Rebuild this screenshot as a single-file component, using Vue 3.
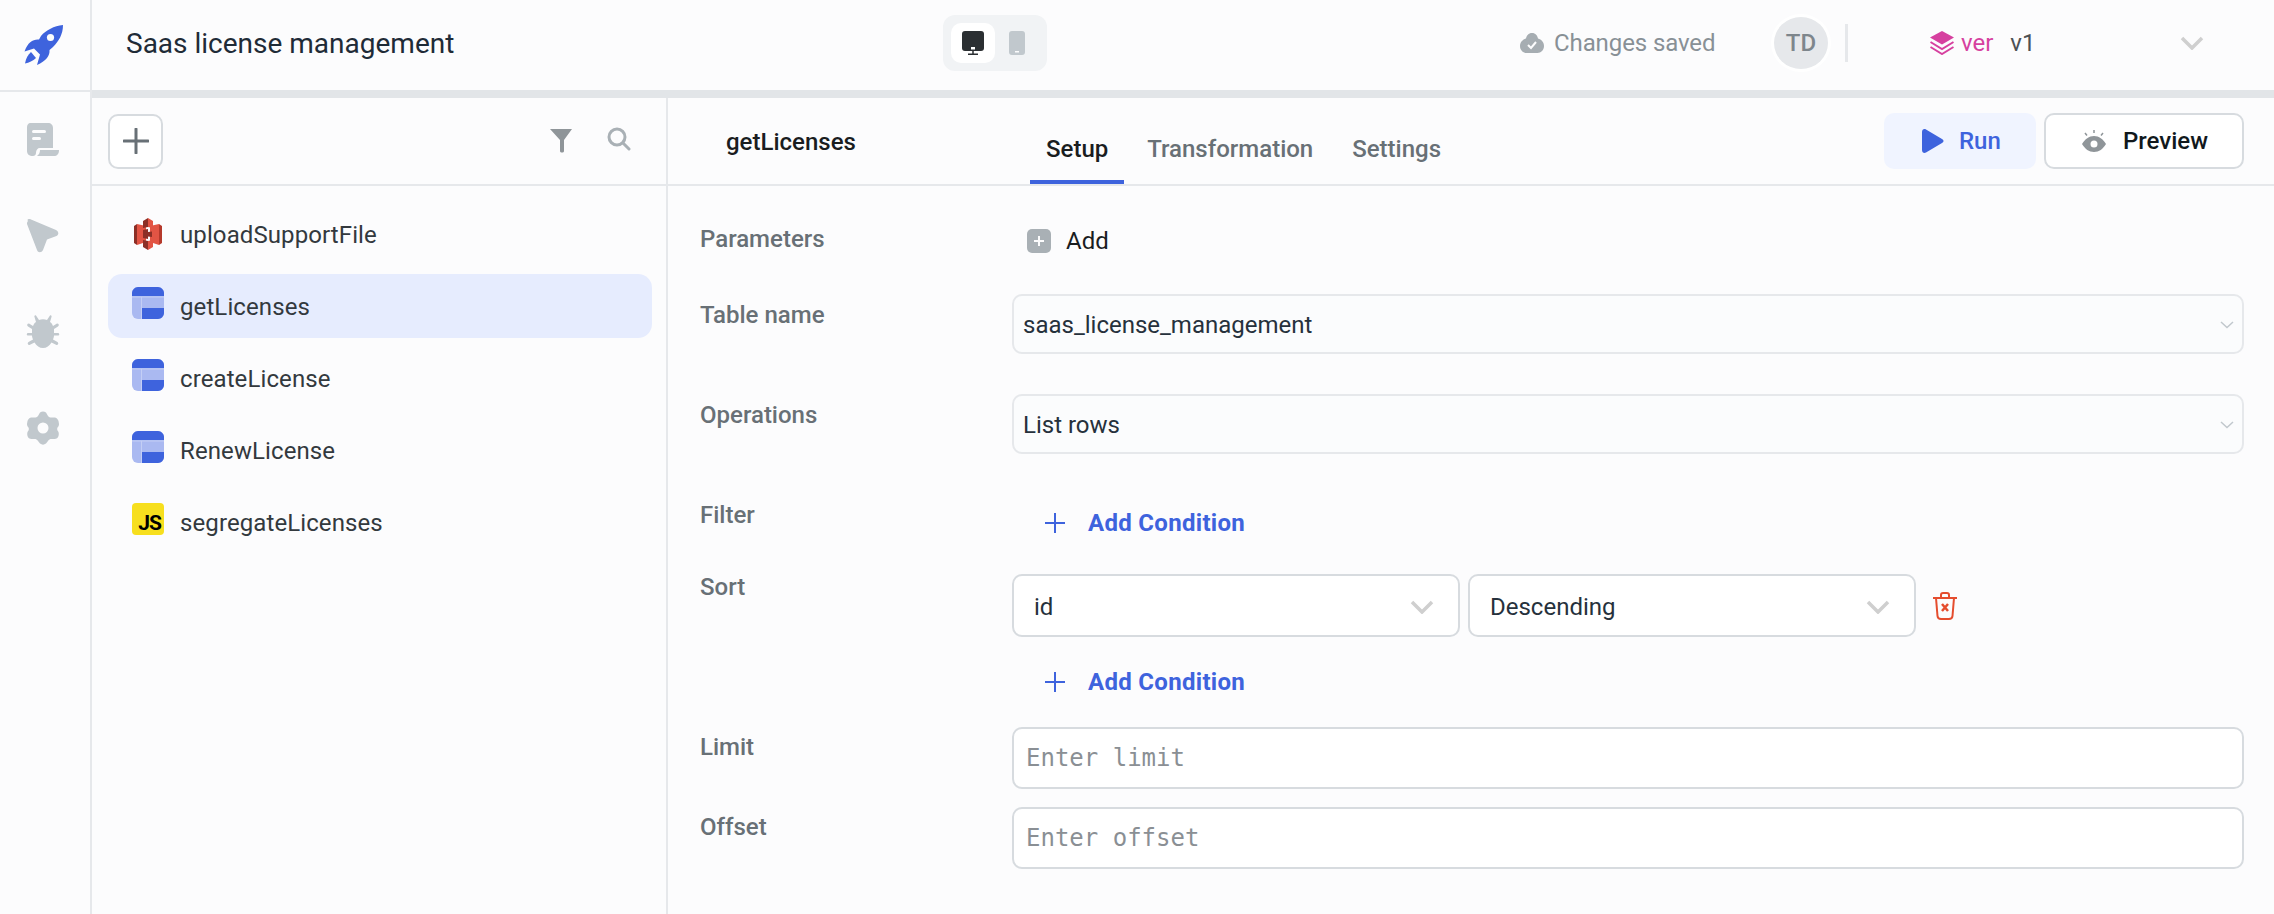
<template>
  <div class="app">
    <!-- left rail -->
    <aside class="rail">
      <div class="rail-logo">
        <svg width="40" height="40" viewBox="0 0 40 40">
          <path fill="#3e63dd" d="M39 0C30 1 22 5 17 11L15 14.500C9 14 4 17 0.500 26.500L10 23.500L16 29.500L13 40C22 36 26 31 25.500 25L29 22C35 16 39 9 39 0Z"/>
          <circle cx="26.500" cy="12.500" r="3.600" fill="#fcfcfd"/>
          <path fill="#3e63dd" d="M7 27L12 33C9 36 5 37.500 1 38.500C2 33 4 30 7 27Z"/>
        </svg>
      </div>
      <nav class="rail-nav">
        <svg width="34" height="34" viewBox="0 0 34 34">
          <path fill="#c1c8cd" d="M5 0H22C25 0 27 2 27 5V25H14C11.500 25 10 27 10 30C10 32 8.500 33 7 33C3 33 1 31 1 28V5C1 2 2 0 5 0Z"/>
          <path fill="#c1c8cd" d="M14 27H33C33 31 31 33 28 33H11C13 31.500 14 29.500 14 27Z"/>
          <rect x="6" y="7" width="14" height="3" rx="1.500" fill="#fcfcfd"/>
          <rect x="6" y="14" width="9" height="3" rx="1.500" fill="#fcfcfd"/>
        </svg>
        <svg width="34" height="34" viewBox="0 0 34 34">
          <path fill="#c1c8cd" d="M2 2C0.500 0.500 3 -0.500 5 0.500L30 11C33 12.500 33 16 30.500 17L21 20.500L17 31C15.500 34 12 34 11 31L1 5C1 4 1 3 2 2Z"/>
        </svg>
        <svg width="34" height="34" viewBox="0 0 34 34">
          <path fill="#c1c8cd" d="M10 0.500L13 5C15.500 4 18.500 4 21 5L24 0.500C25 0 26 1 25.500 2L24 7C25.500 8 26.500 9.500 27 11L31 8.500C33 8.500 33.500 10.500 32 11.500L28 14V18H32.500C33.500 19 33.500 20 32.500 20.500H28C28 22 27.500 23 27 24.500L31.500 27C33 28.500 32 30 30.500 30L25.500 27.500C23.500 31 20.500 33 17 33C13.500 33 10.500 31 8.500 27.500L3.500 30C2 30 1 28.500 2.500 27L7 24.500C6.500 23 6 22 6 20.500H1.500C0.500 20 0.500 19 1.500 18H6V14L2 11.500C0.500 10.500 1 8.500 3 8.500L7 11C7.500 9.500 8.500 8 10 7L8.500 2C8 1 9 0 10 0.500Z"/>
        </svg>
        <svg width="34" height="34" viewBox="0 0 34 34">
          <path fill="#c1c8cd" fill-rule="evenodd" d="M14 1.500C16 0 18 0 20 1.500L22 5C23 6 24 6.500 25.500 6.500L29 6.500C31 7 32 8.500 32.500 10L33 13C33 14.500 32.500 15.500 31.500 16.500C31 17.500 31 18.500 31.500 19.500C33 21 33 23 32.500 25C32 27 30.500 28 28.500 28L25.500 28C24 28 23 28.500 22 30L20 32.500C18 34 16 34 14 32.500L12 30C11 28.500 10 28 8.500 28H5.500C3.500 28 2 27 1.500 25C1 23 1 21 2.500 19.500C3 18.500 3 17.500 2.500 16.500C1.500 15.500 1 14.500 1 13L1.500 10C2 8.500 3 7 5 6.500L8.500 6.500C10 6.500 11 6 12 5ZM17 11.500A5.500 5.500 0 1 0 17 22.500A5.500 5.500 0 1 0 17 11.500Z"/>
        </svg>
      </nav>
    </aside>

    <div class="main">
      <!-- top header -->
      <header class="topbar">
        <h1 class="app-name">Saas license management</h1>
        <div class="device-toggle">
          <span class="device active">
            <svg width="22" height="24" viewBox="0 0 22 24">
              <rect width="22" height="20" rx="3" fill="#2b2f32"/>
              <rect x="9" y="16" width="4" height="2.500" fill="#fff"/>
              <path d="M11 20V23M6 23.200H16" stroke="#2b2f32" stroke-width="1.500"/>
            </svg>
          </span>
          <span class="device">
            <svg width="16" height="24" viewBox="0 0 16 24">
              <rect width="16" height="24" rx="3" fill="#c1c8cd"/>
              <rect x="6" y="20" width="4" height="1.500" fill="#fcfcfd"/>
            </svg>
          </span>
        </div>
        <div class="saved">
          <svg width="24" height="20" viewBox="0 0 24 20">
            <path fill="#a6adb2" d="M12 0C15.500 0 17.500 2.500 18 5.500C21.500 6.500 24 9 24 13C24 17 21 20 17.500 20H6.500C3 20 0 17 0 13C0 9.500 2.500 6.500 6 5.500C6.500 2.500 8.500 0 12 0Z"/>
            <path d="M8 12L11 15L16 9" fill="none" stroke="#fcfcfd" stroke-width="2"/>
          </svg>
          <span>Changes saved</span>
        </div>
        <div class="avatar">TD</div>
        <div class="top-divider"></div>
        <div class="version">
          <svg width="24" height="24" viewBox="0 0 24 24">
            <path fill="#d6409f" d="M12 0L24 6.500L12 13.500L0 6.500Z"/>
            <path fill="none" stroke="#d6409f" stroke-width="2" d="M0.500 11L12 18L23.500 11M0.500 16L12 23L23.500 16"/>
          </svg>
          <span class="ver">ver</span>
          <span class="ver-num">v1</span>
          <svg class="ver-chevron" width="24" height="14" viewBox="0 0 24 14">
            <path d="M2 2L12 12L22 2" fill="none" stroke="#cfcfcf" stroke-width="3.500"/>
          </svg>
        </div>
      </header>

      <div class="body">
        <!-- query list -->
        <section class="queries">
          <div class="queries-tools">
            <button class="add-btn">
              <svg width="26" height="26" viewBox="0 0 26 26">
                <path d="M13 1V25M1 13H25" stroke="#687076" stroke-width="3" stroke-linecap="round"/>
              </svg>
            </button>
            <svg class="tool-filter" width="22" height="24" viewBox="0 0 22 24">
              <path fill="#8f9599" d="M0 0H22L14 11V22C14 24 10 24 10 22V11Z"/>
            </svg>
            <svg class="tool-search" width="24" height="24" viewBox="0 0 24 24">
              <circle cx="10" cy="10" r="8" fill="none" stroke="#a9b0b5" stroke-width="3"/>
              <path d="M16 16L22 22" stroke="#a9b0b5" stroke-width="3" stroke-linecap="round"/>
            </svg>
          </div>
          <ul class="query-list">
            <li v-for="q in queries" :key="q.name" class="query" :class="{ selected: q.selected }">
              <svg v-if="q.kind === 's3'" class="query-icon s3-icon" width="32" height="32" viewBox="0 0 32 32">
                <path fill="#8c2f26" d="M2 8L5 6V27L2 25Z"/>
                <path fill="#e25444" d="M5 6L14 8V24L5 27Z"/>
                <path fill="#e25444" d="M18 8L27 6V27L18 24Z"/>
                <path fill="#b5392c" d="M27 6L30 8V25L27 27Z"/>
                <path fill="#8c2f26" d="M16 0L11 3V10L16 9ZM11 22V29L16 32V23Z"/>
                <path fill="#e25444" d="M16 0L21 3V10L16 9ZM21 22V29L16 32V23Z"/>
                <path fill="#8c2f26" d="M11 12L16 11V14L20 13.500V19L16 18.500V21L11 20Z"/>
              </svg>
              <svg v-else-if="q.kind === 'table'" class="query-icon" width="32" height="32" viewBox="0 0 32 32">
                <rect width="32" height="32" rx="6" fill="#aab9f1"/>
                <path fill="#3e63dd" d="M6 0H26C29 0 32 3 32 6V9H0V6C0 3 3 0 6 0Z"/>
                <path fill="#3e63dd" d="M10 21H32V26C32 29 29 32 26 32H10Z"/>
                <path d="M0 10H32M9.500 10V32" stroke="#c3cef5" stroke-width="1"/>
              </svg>
              <span v-else class="query-icon js-icon">JS</span>
              <span class="query-name">{{ q.name }}</span>
            </li>
          </ul>
        </section>

        <!-- query editor -->
        <section class="editor">
          <div class="editor-head">
            <div class="query-title">getLicenses</div>
            <div class="tabs">
              <span class="tab active">Setup</span>
              <span class="tab">Transformation</span>
              <span class="tab">Settings</span>
            </div>
            <button class="run-btn">
              <svg width="22" height="24" viewBox="0 0 22 24">
                <path fill="#3e63dd" d="M0 3C0 0.500 2 -0.500 4 0.500L20 10C22 11 22 13 20 14L4 23.500C2 24.500 0 23.500 0 21Z"/>
              </svg>
              Run
            </button>
            <button class="preview-btn">
              <svg width="24" height="24" viewBox="0 0 24 24">
                <path d="M12 1V4M3 4L5 6.500M21 4L19 6.500" stroke="#8f9599" stroke-width="1.500"/>
                <path fill="#8f9599" fill-rule="evenodd" d="M12 7C17 7 21 10 24 15C21 20 17 23 12 23C7 23 3 20 0 15C3 10 7 7 12 7ZM12 11.500A3.500 3.500 0 1 0 12 18.500A3.500 3.500 0 1 0 12 11.500Z"/>
              </svg>
              Preview
            </button>
          </div>

          <div class="form">
            <div class="row row-params">
              <label>Parameters</label>
              <div class="add-param">
                <svg width="24" height="24" viewBox="0 0 24 24">
                  <rect width="24" height="24" rx="5" fill="#a9b0b5"/>
                  <path d="M12 7V17M7 12H17" stroke="#fcfcfd" stroke-width="2"/>
                </svg>
                <span>Add</span>
              </div>
            </div>
            <div class="row row-table">
              <label>Table name</label>
              <div class="field select">
                saas_license_management
                <svg width="14" height="8" viewBox="0 0 14 8"><path d="M1 1L7 6.500L13 1" fill="none" stroke="#c1c8cd" stroke-width="1.500"/></svg>
              </div>
            </div>
            <div class="row row-ops">
              <label>Operations</label>
              <div class="field select">
                List rows
                <svg width="14" height="8" viewBox="0 0 14 8"><path d="M1 1L7 6.500L13 1" fill="none" stroke="#c1c8cd" stroke-width="1.500"/></svg>
              </div>
            </div>
            <div class="row row-filter">
              <label>Filter</label>
              <div class="add-condition">
                <svg width="20" height="20" viewBox="0 0 20 20"><path d="M10 0V20M0 10H20" stroke="#3e63dd" stroke-width="2"/></svg>
                <span>Add Condition</span>
              </div>
            </div>
            <div class="row row-sort">
              <label>Sort</label>
              <div class="sort-line">
                <div class="field sort-select">id
                  <svg width="24" height="14" viewBox="0 0 24 14"><path d="M2 2L12 12L22 2" fill="none" stroke="#cfcfcf" stroke-width="3.500"/></svg>
                </div>
                <div class="field sort-select">Descending
                  <svg width="24" height="14" viewBox="0 0 24 14"><path d="M2 2L12 12L22 2" fill="none" stroke="#cfcfcf" stroke-width="3.500"/></svg>
                </div>
                <svg class="trash" width="24" height="28" viewBox="0 0 24 28">
                  <path fill="none" stroke="#e54d2e" stroke-width="2" d="M0 6H24M3 6L4.500 24C4.700 26 6 27 8 27H16C18 27 19.300 26 19.500 24L21 6M8 6V3C8 2 9 1 10 1H14C15 1 16 2 16 3V6"/>
                  <path stroke="#e54d2e" stroke-width="2.500" d="M9 12L15 19M15 12L9 19"/>
                </svg>
              </div>
            </div>
            <div class="row row-sort-add">
              <label></label>
              <div class="add-condition">
                <svg width="20" height="20" viewBox="0 0 20 20"><path d="M10 0V20M0 10H20" stroke="#3e63dd" stroke-width="2"/></svg>
                <span>Add Condition</span>
              </div>
            </div>
            <div class="row row-limit">
              <label>Limit</label>
              <input class="field text-input" placeholder="Enter limit" />
            </div>
            <div class="row row-offset">
              <label>Offset</label>
              <input class="field text-input" placeholder="Enter offset" />
            </div>
          </div>
        </section>
      </div>
    </div>
  </div>
</template>

<script setup>
const queries = [
  { name: 'uploadSupportFile', kind: 's3' },
  { name: 'getLicenses', kind: 'table', selected: true },
  { name: 'createLicense', kind: 'table' },
  { name: 'RenewLicense', kind: 'table' },
  { name: 'segregateLicenses', kind: 'js' }
]
</script>

<style>
html, body {
  margin: 0;
  background: #fcfcfd;
  overflow: hidden;
}
</style>

<style scoped>
* {
  box-sizing: border-box;
}

.app {
  display: flex;
  width: 2274px;
  height: 914px;
  background: #fcfcfd;
  font-family: "Roboto", "Noto Sans", sans-serif;
  font-size: 24px;
  color: #2b2f32;
}

/* left rail */
.rail {
  width: 92px;
  flex-shrink: 0;
  border-right: 2px solid #e6e8eb;
}

.rail-logo {
  height: 92px;
  padding: 25px 0 0 24px;
  border-bottom: 2px solid #e6e8eb;
}

.rail-nav {
  display: flex;
  flex-direction: column;
  gap: 62px;
  padding: 31px 0 0 26px;
}

.main {
  flex: 1;
  display: flex;
  flex-direction: column;
  min-width: 0;
}

/* top header */
.topbar {
  height: 98px;
  flex-shrink: 0;
  display: flex;
  align-items: center;
  padding: 0 30px 4px 34px;
  border-bottom: 8px solid #e2e5e8;
}

.app-name {
  width: 817px;
  margin: 0;
  font-size: 28px;
  font-weight: 400;
  color: #1f2b37;
}

.device-toggle {
  display: flex;
  align-items: center;
  width: 104px;
  height: 56px;
  padding: 0 8px;
  background: #f1f3f5;
  border-radius: 12px;
}

.device {
  width: 44px;
  height: 40px;
  display: flex;
  align-items: center;
  justify-content: center;
  border-radius: 10px;
}

.device.active {
  background: #fff;
}

.saved {
  display: flex;
  align-items: center;
  gap: 10px;
  margin-left: 473px;
  width: 254px;
  letter-spacing: -0.1px;
  color: #889096;
}

.avatar {
  width: 54px;
  height: 52px;
  border-radius: 50%;
  background: #e6e8eb;
  color: #7e868c;
  font-weight: 500;
  display: flex;
  align-items: center;
  justify-content: center;
  box-shadow: 0 0 0 3px #fff;
}

.top-divider {
  width: 3px;
  height: 38px;
  margin-left: 17px;
  background: #e6e8eb;
}

.version {
  display: flex;
  align-items: center;
  margin-left: 82px;
  flex: 1;
}

.ver {
  margin-left: 7px;
  color: #d6409f;
}

.ver-num {
  margin-left: 17px;
  color: #4c5155;
}

.ver-chevron {
  margin-left: auto;
  margin-right: 40px;
}

.body {
  flex: 1;
  display: flex;
  min-height: 0;
}

/* query list */
.queries {
  width: 576px;
  flex-shrink: 0;
  border-right: 2px solid #e6e8eb;
}

.queries-tools {
  height: 88px;
  display: flex;
  align-items: center;
  padding: 0 0 0 16px;
  border-bottom: 2px solid #e6e8eb;
}

.add-btn {
  width: 55px;
  height: 55px;
  padding: 0;
  display: flex;
  align-items: center;
  justify-content: center;
  background: #fff;
  border: 2px solid #d7dbdf;
  border-radius: 10px;
}

.tool-filter {
  margin-left: 387px;
}

.tool-search {
  margin-left: 35px;
  margin-top: -4px;
}

.query-list {
  list-style: none;
  margin: 0;
  padding: 16px 14px 0 16px;
}

.query {
  height: 64px;
  margin-bottom: 8px;
  display: flex;
  align-items: center;
  padding: 0 24px;
  border-radius: 14px;
  color: #33393e;
}

.query.selected {
  background: #e6ecfe;
}

.query-icon {
  width: 32px;
  flex-shrink: 0;
  margin-top: -6px;
}

.s3-icon {
  margin-top: 0;
}

.query-name {
  margin-left: 16px;
  margin-top: 1px;
  letter-spacing: 0.1px;
}

.js-icon {
  height: 32px;
  background: #f7df1e;
  border-radius: 4px;
  color: #000;
  font-size: 21px;
  font-weight: 700;
  letter-spacing: -1px;
  display: flex;
  align-items: flex-end;
  justify-content: flex-end;
  padding: 0 3px 1px 0;
  line-height: 1;
}

/* query editor */
.editor {
  flex: 1;
  min-width: 0;
}

.editor-head {
  height: 88px;
  display: flex;
  align-items: center;
  padding: 0 30px 0 58px;
  border-bottom: 2px solid #e6e8eb;
}

.query-title {
  width: 304px;
  margin-top: 2px;
  font-weight: 500;
  color: #1a1d1f;
}

.tabs {
  display: flex;
  align-self: stretch;
  flex: 1;
}

.tab {
  padding: 37px 16px 0;
  margin-right: 7px;
  font-weight: 500;
  color: #687076;
}

.tab.active {
  color: #1a1d1f;
  border-bottom: 4px solid #3e63dd;
}

.run-btn,
.preview-btn {
  height: 56px;
  display: flex;
  align-items: center;
  border-radius: 10px;
  font-family: inherit;
  font-size: 24px;
  font-weight: 500;
}

.run-btn {
  width: 152px;
  padding-left: 38px;
  gap: 15px;
  margin-right: 8px;
  background: #f0f4ff;
  border: 0;
  color: #3e63dd;
}

.preview-btn {
  width: 200px;
  padding-left: 36px;
  gap: 17px;
  background: #fff;
  border: 2px solid #d7dbdf;
  color: #11181c;
}

.form {
  padding-right: 30px;
}

.row {
  display: flex;
  align-items: flex-start;
  padding-left: 32px;
}

.row label {
  width: 312px;
  flex-shrink: 0;
  font-weight: 500;
  color: #687076;
  line-height: 32px;
}

.row-params { padding-top: 36px; height: 108px; }
.row-table { height: 100px; }
.row-ops { height: 100px; }
.row-filter { height: 76px; }
.row-sort { height: 96px; }
.row-sort-add { height: 61px; }
.row-limit { height: 80px; }

.row-params label { margin-top: 1px; }
.row-table label { margin-top: 5px; }
.row-ops label { margin-top: 5px; }
.row-filter label { margin-top: 5px; }
.row-sort label { margin-top: 1px; }
.row-limit label,
.row-offset label { margin-top: 4px; }

.add-param {
  display: flex;
  align-items: center;
  gap: 15px;
  margin: 3px 0 0 15px;
  line-height: 32px;
  color: #1a1d1f;
}

.add-condition {
  display: flex;
  align-items: center;
  gap: 23px;
  margin-left: 33px;
  line-height: 32px;
  font-weight: 700;
  letter-spacing: 0.3px;
  color: #3e63dd;
}

.row-filter .add-condition {
  margin-top: 13px;
}

.field {
  background: #fff;
  border: 2px solid #d7dbdf;
  border-radius: 10px;
}

.select {
  flex: 1;
  height: 60px;
  display: flex;
  align-items: center;
  justify-content: space-between;
  padding: 2px 8px 0 9px;
  background: #fbfcfd;
  border-color: #e6e8eb;
  color: #26313c;
}

.sort-line {
  flex: 1;
  display: flex;
  align-items: flex-start;
  margin-top: 4px;
}

.sort-select {
  width: 448px;
  height: 63px;
  margin-right: 8px;
  display: flex;
  align-items: center;
  justify-content: space-between;
  padding: 3px 24px 0 20px;
  color: #26313c;
}

.trash {
  margin: 18px 0 0 9px;
}

.text-input {
  flex: 1;
  height: 62px;
  padding: 0 12px;
  outline: none;
  font-family: "DejaVu Sans Mono", monospace;
  font-size: 24px;
  color: #26313c;
}

.text-input::placeholder {
  color: #8a8f94;
  opacity: 1;
}
</style>
